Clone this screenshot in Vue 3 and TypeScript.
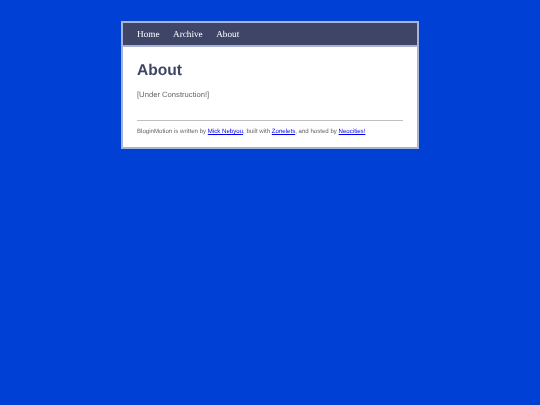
<script setup lang="ts">
const links: string[] = ['Home', 'Archive', 'About']
</script>

<template>
  <div class="page">
    <div class="box">
      <nav class="nav">
        <a v-for="l in links" :key="l" class="nav-link">{{ l }}</a>
      </nav>
      <main class="main">
        <h1 class="title">About</h1>
        <p class="text">[Under Construction!]</p>
        <hr class="rule" />
        <footer class="foot">BloginMotion is written by <a href="#" class="link">Mick Nebyou</a>, built with <a href="#" class="link">Zonelets</a>, and hosted by <a href="#" class="link">Neocities!</a></footer>
      </main>
    </div>
  </div>
</template>

<style>
html, body { margin: 0; background: #0040d4; }
</style>

<style scoped>
.page {
  width: 540px;
  height: 405px;
  background: #0040d4;
  padding-top: 21px;
  box-sizing: border-box;
  overflow: hidden;
  text-rendering: geometricPrecision;
}
.box {
  width: 298px;
  margin: 0 auto 0 121px;
  box-sizing: border-box;
  border: 2px solid #a9b3d3;
  background: #fff;
  will-change: transform;
}
.nav {
  height: 22px;
  box-sizing: content-box;
  background: #3f4566;
  border-bottom: 2px solid #a9b3d3;
  display: flex;
  align-items: center;
  gap: 13.6px;
  padding-left: 14px;
  font-family: "Liberation Serif", serif;
  font-size: 9.2px;
  line-height: 24px;
  color: #fff;
}
.main {
  padding: 14px 14px 11px;
  font-family: "Liberation Sans", sans-serif;
}
.title {
  margin: 0;
  font-size: 15.6px;
  line-height: 19px;
  font-weight: 700;
  color: #3f4566;
}
.text {
  margin: 9px 0 0;
  font-size: 7.65px;
  line-height: 11px;
  color: #666;
}
.rule {
  margin: 20px 0 0;
  border: 0;
  height: 1px;
  background: #c0c0c0;
}
.foot {
  margin-top: 7px;
  font-size: 6.1px;
  line-height: 8px;
  color: #666;
  white-space: nowrap;
}
.link {
  color: #0000ee;
  text-decoration: underline;
}
</style>
